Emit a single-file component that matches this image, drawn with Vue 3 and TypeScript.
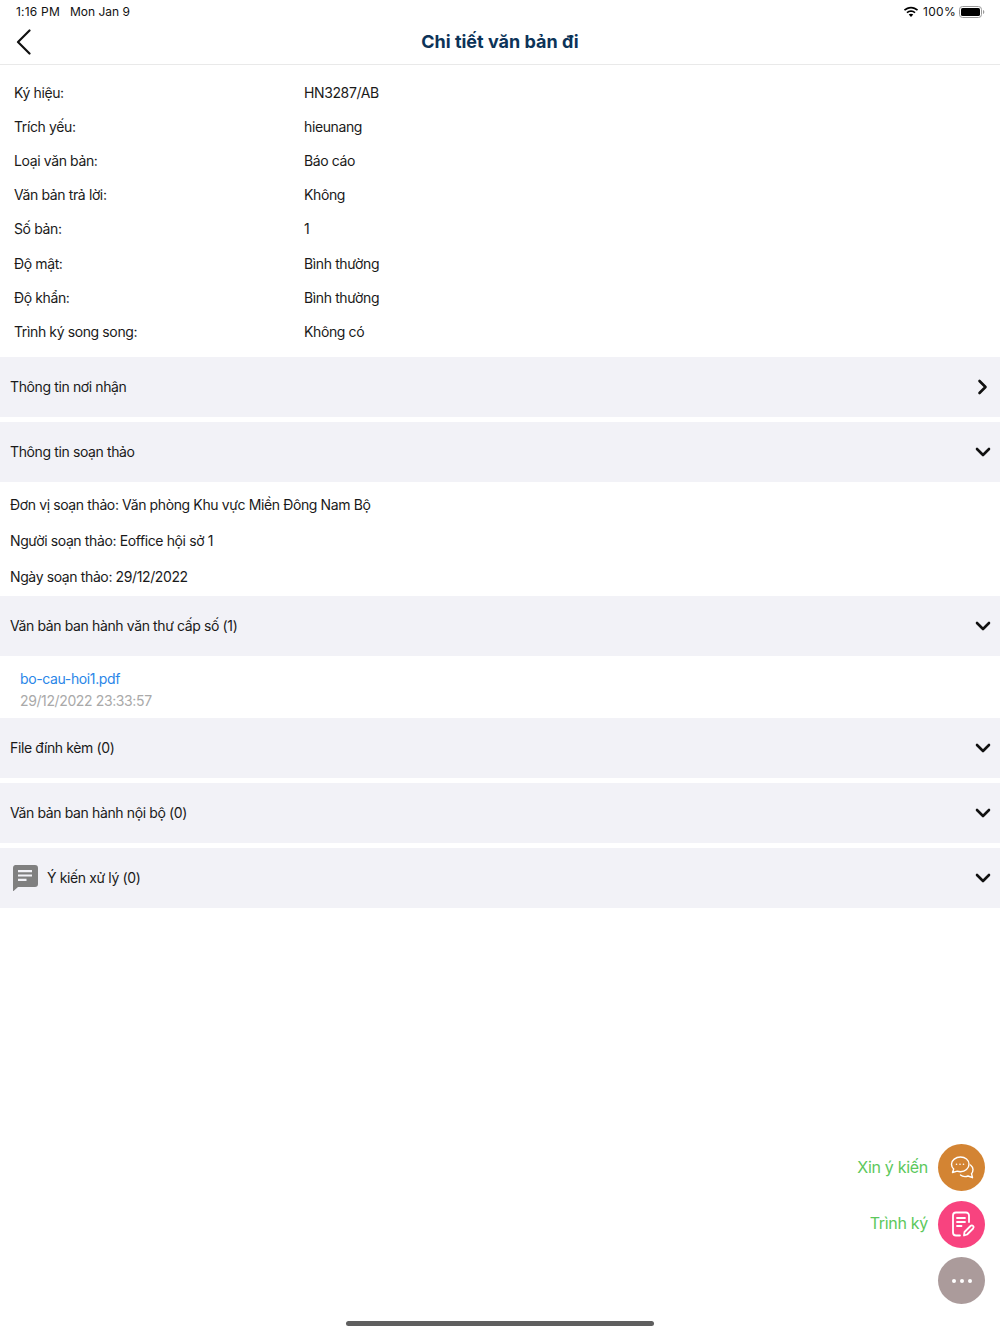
<template>
  <div class="screen">
    <div class="status-bar">
      <span class="status-time">1:16 PM</span>
      <span class="status-date">Mon Jan 9</span>
      <span class="status-right">
        <svg class="wifi" width="16" height="12" viewBox="0 0 16 12">
          <path d="M8 2.400c2.300 0 4.400.9 6 2.400l1.100-1.200C13.200 1.800 10.700.7 8 .7S2.800 1.800.9 3.600L2 4.800c1.600-1.500 3.700-2.400 6-2.400z" fill="#000" />
          <path d="M8 5.900c1.300 0 2.500.5 3.500 1.400l1.100-1.200C11.400 5 9.800 4.200 8 4.200s-3.400.8-4.600 1.900l1.100 1.200c1-.9 2.200-1.400 3.500-1.400z" fill="#000" />
          <path d="M8 7.700c-.9 0-1.700.4-2.300.9L8 11.100l2.300-2.500c-.6-.5-1.400-.9-2.300-.9z" fill="#000" />
        </svg>
        <span class="status-pct">100%</span>
        <svg width="26" height="12" viewBox="0 0 26 12">
          <rect x="0.5" y="0.5" width="22" height="11" rx="3" fill="none" stroke="#9a9a9a" />
          <rect x="2" y="2" width="19" height="8" rx="1.600" fill="#000" />
          <path d="M24 4v4c.8-.3 1.300-1.100 1.300-2S24.800 4.300 24 4z" fill="#9a9a9a" />
        </svg>
      </span>
    </div>

    <header class="nav">
      <svg class="back" width="16" height="26" viewBox="0 0 16 26">
        <path d="M13.500 1.500 2 13l11.500 11.500" fill="none" stroke="#111" stroke-width="2.200" stroke-linecap="round" stroke-linejoin="round" />
      </svg>
      <h1>Chi tiết văn bản đi</h1>
    </header>

    <div class="info">
      <div v-for="row in infoRows" :key="row.label" class="info-row">
        <span class="info-label">{{ row.label }}</span>
        <span>{{ row.value }}</span>
      </div>
    </div>

    <div class="sections">
      <div class="section">
        <span>Thông tin nơi nhận</span>
        <svg class="chev" width="20" height="20" viewBox="0 0 20 20"><path d="M6.500 4l6 6-6 6" /></svg>
      </div>
      <div class="section">
        <span>Thông tin soạn thảo</span>
        <svg class="chev" width="20" height="20" viewBox="0 0 20 20"><path d="M4 7l6 6 6-6" /></svg>
      </div>
      <div class="draft">
        <p v-for="line in draftLines" :key="line">{{ line }}</p>
      </div>
      <div class="section">
        <span>Văn bản ban hành văn thư cấp số (1)</span>
        <svg class="chev" width="20" height="20" viewBox="0 0 20 20"><path d="M4 7l6 6 6-6" /></svg>
      </div>
      <div class="file">
        <a class="file-name">bo-cau-hoi1.pdf</a>
        <span class="file-date">29/12/2022 23:33:57</span>
      </div>
      <div class="section">
        <span>File đính kèm (0)</span>
        <svg class="chev" width="20" height="20" viewBox="0 0 20 20"><path d="M4 7l6 6 6-6" /></svg>
      </div>
      <div class="section">
        <span>Văn bản ban hành nội bộ (0)</span>
        <svg class="chev" width="20" height="20" viewBox="0 0 20 20"><path d="M4 7l6 6 6-6" /></svg>
      </div>
      <div class="section">
        <span class="with-icon">
          <svg width="26" height="26" viewBox="0 0 26 26">
            <path d="M3 0h20a3 3 0 0 1 3 3v16a3 3 0 0 1-3 3H6l-5 4.500V3a3 3 0 0 1 2-3z" fill="#808080" />
            <path d="M6 5h14v2.200H6zM6 9.400h14v2.200H6zM6 13.800h8.500V16H6z" fill="#f2f2f7" />
          </svg>
          Ý kiến xử lý (0)
        </span>
        <svg class="chev" width="20" height="20" viewBox="0 0 20 20"><path d="M4 7l6 6 6-6" /></svg>
      </div>
    </div>

    <div class="fabs">
      <div class="fab-row">
        <span class="fab-label">Xin ý kiến</span>
        <div class="fab orange">
          <svg width="28" height="28" viewBox="0 0 28 28" fill="none" stroke="#fff" stroke-width="1.400" stroke-linecap="round" stroke-linejoin="round">
            <path d="M12.500 3C7.800 3 3.500 6.200 3.500 10.200c0 1.900.8 3.600 2.200 4.900L4.500 18.500l4.700-1.300c1 .3 2.100.5 3.300.5 4.700 0 8.500-3.300 8.500-7.500S17.200 3 12.500 3z" />
            <path d="M22.500 11c1.500 1.200 2.500 2.900 2.500 4.500 0 1.600-.5 3-1.500 4.200l1 4-4.500-1.700c-1 .4-2 .6-3 .6-1.800 0-3.400-.6-4.500-1.600" />
            <circle cx="8.500" cy="10.300" r=".8" fill="#fff" stroke="none" />
            <circle cx="12" cy="10.300" r=".8" fill="#fff" stroke="none" />
            <circle cx="15.500" cy="10.300" r=".8" fill="#fff" stroke="none" />
          </svg>
        </div>
      </div>
      <div class="fab-row">
        <span class="fab-label">Trình ký</span>
        <div class="fab pink">
          <svg width="28" height="28" viewBox="0 0 28 28" fill="none" stroke="#fff" stroke-width="1.800" stroke-linecap="round" stroke-linejoin="round">
            <path d="M21 12V5.500C21 3.600 19.800 2.500 18 2.500H8C6.200 2.500 5 3.600 5 5.500v17c0 1.900 1.200 3 3 3h4" />
            <path d="M9 8h8M9 12h8M9 16h4.500" />
            <path d="M16 25.500l.5-3.500 6-6c.8-.8 1.900-.8 2.600 0 .7.700.7 1.700 0 2.500l-6 6z" />
          </svg>
        </div>
      </div>
      <div class="fab-row">
        <div class="fab grey">
          <i></i><i></i><i></i>
        </div>
      </div>
    </div>

    <div class="home-indicator"></div>
  </div>
</template>

<script setup lang="ts">
interface InfoRow {
  label: string
  value: string
}

const infoRows: InfoRow[] = [
  { label: 'Ký hiệu:', value: 'HN3287/AB' },
  { label: 'Trích yếu:', value: 'hieunang' },
  { label: 'Loại văn bản:', value: 'Báo cáo' },
  { label: 'Văn bản trả lời:', value: 'Không' },
  { label: 'Số bản:', value: '1' },
  { label: 'Độ mật:', value: 'Bình thường' },
  { label: 'Độ khẩn:', value: 'Bình thường' },
  { label: 'Trình ký song song:', value: 'Không có' },
]

const draftLines = [
  'Đơn vị soạn thảo: Văn phòng Khu vực Miền Đông Nam Bộ',
  'Người soạn thảo: Eoffice hội sở 1',
  'Ngày soạn thảo: 29/12/2022',
]
</script>

<style>
body {
  background: #fff;
}
</style>

<style scoped>
.screen {
  position: relative;
  width: 1000px;
  height: 1334px;
  overflow: hidden;
  background: #fff;
  color: #1a1a1a;
  font-family: Inter, "Noto Sans", sans-serif;
  font-size: 14px;
  letter-spacing: -0.38px;
}
.status-bar {
  display: flex;
  align-items: center;
  height: 23px;
  padding: 0 15px 0 16px;
  font-size: 12px;
  letter-spacing: 0;
  color: #111;
}
.status-time {
  letter-spacing: 0.2px;
}
.status-date {
  margin-left: 10px;
}
.status-pct {
  letter-spacing: 0.3px;
}
.status-right {
  display: flex;
  align-items: center;
  gap: 3px;
  margin-left: auto;
}
.wifi {
  margin-right: 1px;
}
.nav {
  position: relative;
  display: flex;
  align-items: center;
  justify-content: center;
  box-sizing: border-box;
  height: 42px;
  border-bottom: 1px solid #e9e9e9;
}
.back {
  position: absolute;
  left: 16px;
  top: 6px;
}
.nav h1 {
  margin: 0;
  font-size: 18px;
  font-weight: 700;
  letter-spacing: 0;
  color: #0c3358;
  padding-bottom: 4px;
}
.info {
  display: flex;
  flex-direction: column;
  padding: 10px 0 8px 14px;
}
.info-row {
  display: flex;
  align-items: center;
  height: 34.2px;
}
.info-label {
  width: 290px;
}
.section {
  display: flex;
  align-items: center;
  justify-content: space-between;
  height: 60px;
  padding: 0 7.500px 0 10px;
  background: #f2f2f7;
  margin-bottom: 5px;
}
.with-icon {
  display: flex;
  align-items: center;
  gap: 9px;
  margin-left: 2px;
}
.chev {
  fill: none;
  stroke: #111;
  stroke-width: 2.600;
  stroke-linecap: round;
  stroke-linejoin: round;
}
.draft {
  display: flex;
  flex-direction: column;
  gap: 18px;
  padding: 14px 10px 10px;
  margin-top: -5px;
}
.draft p {
  margin: 0;
  line-height: 18px;
}
.file {
  display: flex;
  flex-direction: column;
  gap: 5px;
  height: 62px;
  box-sizing: border-box;
  padding: 14px 20px 0;
  margin-top: -5px;
}
.file-name {
  color: #2a86e8;
}
.file-date {
  color: #a9a9a9;
}
.fabs {
  position: absolute;
  right: 15px;
  top: 1144px;
  display: flex;
  flex-direction: column;
  gap: 9.700px;
}
.fab-row {
  display: flex;
  align-items: center;
  justify-content: flex-end;
  gap: 10px;
}
.fab-label {
  color: #5cc85c;
  font-size: 16px;
  letter-spacing: -0.3px;
  padding-bottom: 2px;
}
.fab {
  display: flex;
  align-items: center;
  justify-content: center;
  width: 47px;
  height: 47px;
  border-radius: 50%;
}
.orange {
  background: #d38433;
}
.pink {
  background: #f8437f;
}
.grey {
  gap: 4px;
  background: #ab9b9b;
}
.grey i {
  width: 4px;
  height: 4px;
  border-radius: 50%;
  background: #fff;
}
.home-indicator {
  position: absolute;
  left: 346px;
  bottom: 8px;
  width: 308px;
  height: 5px;
  border-radius: 3px;
  background: #5f5f5f;
}
</style>
